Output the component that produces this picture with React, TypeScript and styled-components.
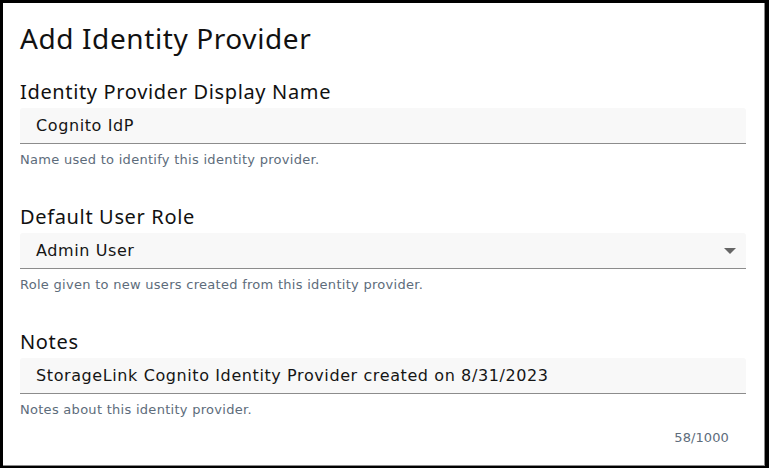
import React from "react";
import styled, { createGlobalStyle } from "styled-components";

// Global
const GlobalStyle = createGlobalStyle`
  html, body {
    margin: 0;
    padding: 0;
    background: #000;
  }
  #root {
    height: 468px;
  }
  * {
    box-sizing: border-box;
  }
`;

// Styles
const Card = styled.div`
  margin: 3px 4px 2px 3px;
  height: 463px;
  background: #fff;
  border-right: 1px solid #8a8a8a;
  border-bottom: 1px solid #8a8a8a;
  padding: 17px 18px 0 17px;
  display: flex;
  flex-direction: column;
  font-family: "Noto Sans", "DejaVu Sans", sans-serif;
`;

const Title = styled.h1`
  margin: 0 0 23px;
  font-size: 28px;
  font-weight: 400;
  line-height: 36px;
  color: #111;
  letter-spacing: 0.6px;
`;

const Field = styled.div`
  display: flex;
  flex-direction: column;
  margin-bottom: 36px;
`;

const Label = styled.label`
  font-size: 20px;
  line-height: 26px;
  color: #111;
  margin-bottom: 3px;
  letter-spacing: 0.65px;
`;

const InputBox = styled.div`
  position: relative;
  height: 36px;
  background: #f8f8f8;
  border-bottom: 1px solid #8c8c8c;
  border-radius: 3px 3px 0 0;
  padding: 0 16px;
  display: flex;
  align-items: center;
  font-family: "DejaVu Sans", "Noto Sans", sans-serif;
  font-size: 16px;
  color: #151515;
  letter-spacing: 0.6px;
`;

const Caret = styled.span`
  position: absolute;
  right: 10px;
  top: 15px;
  width: 0;
  height: 0;
  border-left: 6px solid transparent;
  border-right: 6px solid transparent;
  border-top: 6px solid #666;
`;

const Helper = styled.div`
  margin-top: 8px;
  font-family: "DejaVu Sans", "Noto Sans", sans-serif;
  font-size: 13px;
  line-height: 16px;
  color: #5d6c7b;
  letter-spacing: 0.28px;
`;

const HelperRow = styled.div`
  display: flex;
  flex-direction: column;
`;

const Counter = styled(Helper)`
  align-self: flex-end;
  margin: 12px 17px 0 0;
  letter-spacing: 0.1px;
`;

// Interface
interface IFieldProps {
  label: string;
  value: string;
  helper: string;
  select?: boolean;
  counter?: string;
}

const FormField: React.FC<IFieldProps> = ({ label, value, helper, select, counter }) => {
  return (
    <Field>
      <Label>{label}</Label>
      <InputBox>
        {value}
        {select && <Caret />}
      </InputBox>
      <HelperRow>
        <Helper>{helper}</Helper>
        {counter && <Counter>{counter}</Counter>}
      </HelperRow>
    </Field>
  );
};

// Component
const App: React.FC = () => {
  return (
    <>
      <GlobalStyle />
      <Card>
        <Title>Add Identity Provider</Title>
        <FormField
          label="Identity Provider Display Name"
          value="Cognito IdP"
          helper="Name used to identify this identity provider."
        />
        <FormField
          label="Default User Role"
          value="Admin User"
          helper="Role given to new users created from this identity provider."
          select
        />
        <FormField
          label="Notes"
          value="StorageLink Cognito Identity Provider created on 8/31/2023"
          helper="Notes about this identity provider."
          counter="58/1000"
        />
      </Card>
    </>
  );
};

export default App;
